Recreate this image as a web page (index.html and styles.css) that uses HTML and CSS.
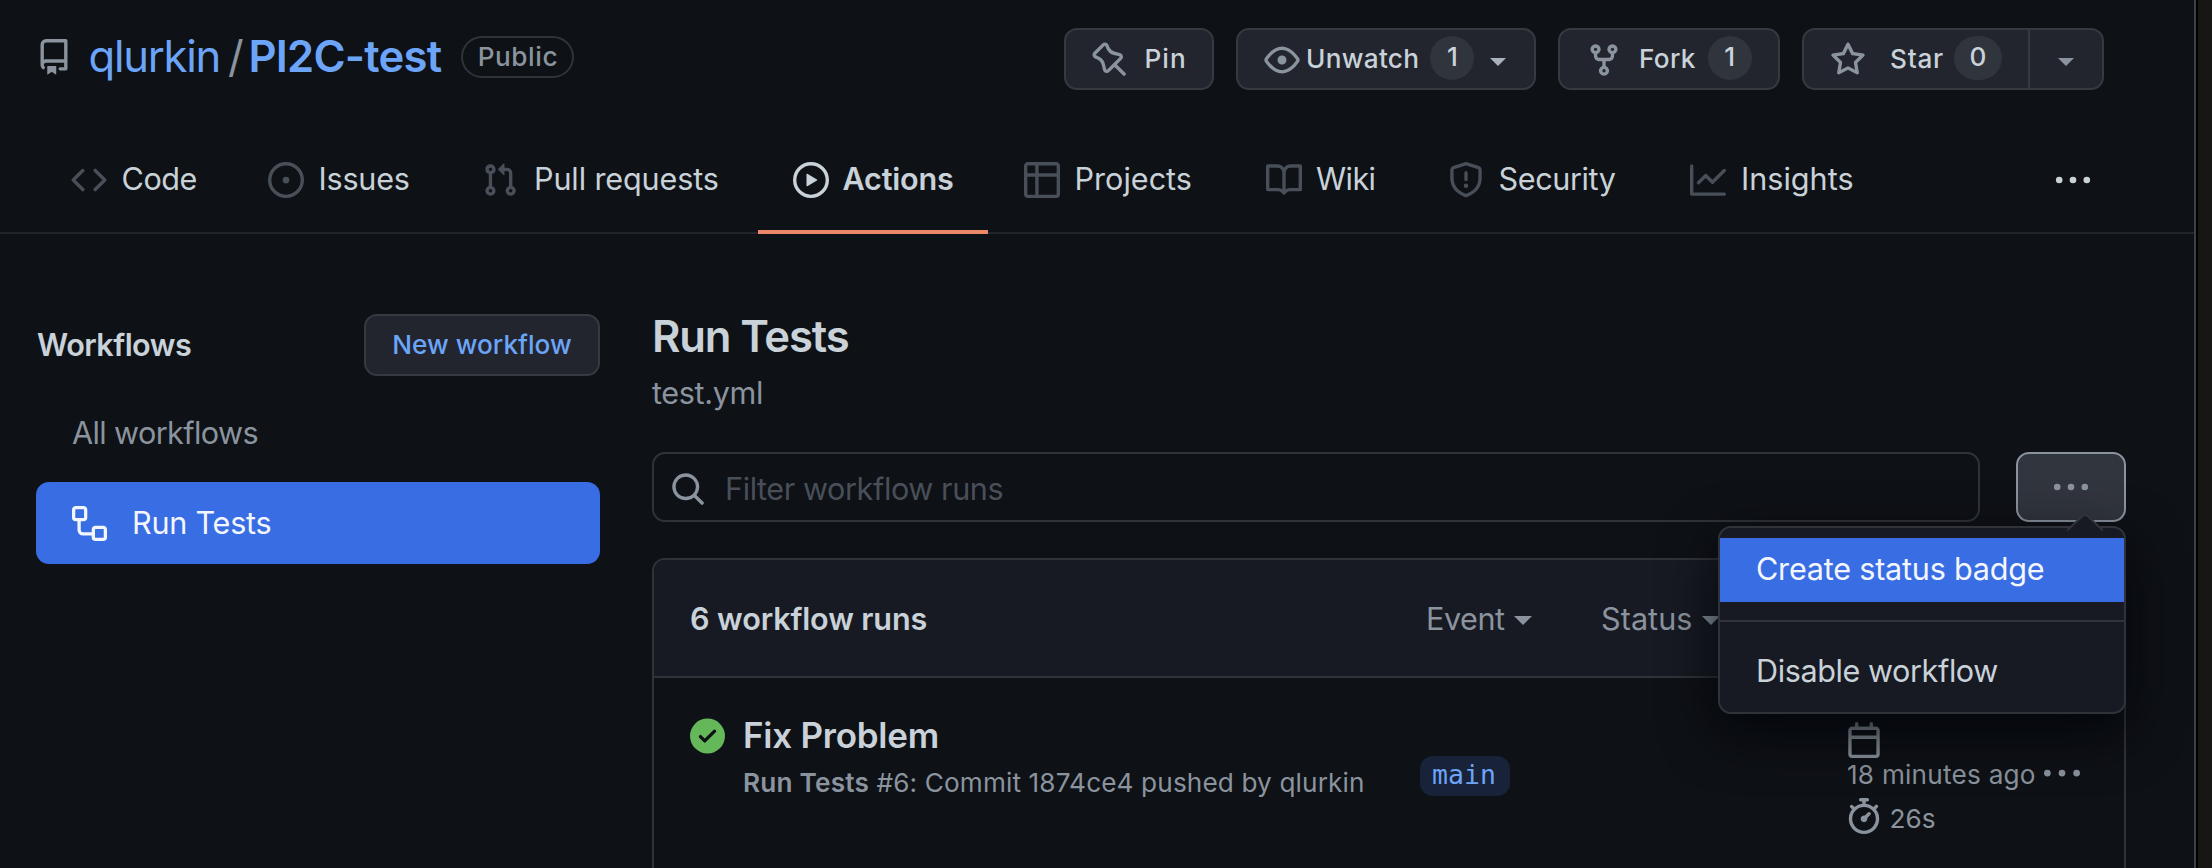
FILE: index.html
```html
<!DOCTYPE html>
<html lang="en">
<head>
<meta charset="utf-8">
<title>Actions · qlurkin/PI2C-test</title>
<link rel="stylesheet" href="styles.css">
</head>
<body>
<div class="page">
  <header class="repo-head">
    <div class="repo-title">
      <svg class="icon" viewBox="0 0 16 16"><path d="M2 2.5A2.5 2.5 0 014.5 0h8.75a.75.75 0 01.75.75v12.5a.75.75 0 01-.75.75h-2.5a.75.75 0 110-1.5h1.75v-2h-8a1 1 0 00-.714 1.7.75.75 0 01-1.072 1.05A2.495 2.495 0 012 11.5v-9zm10.5-1V9h-8c-.356 0-.694.074-1 .208V2.5a1 1 0 011-1h8zM5 12.25v3.25a.25.25 0 00.4.2l1.45-1.087a.25.25 0 01.3 0L8.6 15.7a.25.25 0 00.4-.2v-3.25a.25.25 0 00-.25-.25h-3.5a.25.25 0 00-.25.25z"/></svg>
      <a class="owner">qlurkin</a><span class="slash">/</span><a class="repo">PI2C-test</a>
      <span class="visibility">Public</span>
    </div>
    <div class="repo-actions">
      <div class="btn btn-pin">
        <svg class="icon" viewBox="0 0 16 16"><path d="M4.456.734a1.75 1.75 0 012.826.504l.613 1.327a3.081 3.081 0 002.084 1.707l2.454.584c1.332.317 1.8 1.972.832 2.94L11.06 10l3.72 3.72a.75.75 0 11-1.061 1.06L10 11.06l-2.204 2.205c-.968.968-2.623.5-2.94-.832l-.584-2.454a3.081 3.081 0 00-1.707-2.084l-1.327-.613a1.75 1.75 0 01-.504-2.826L4.456.734zM5.92 1.866a.25.25 0 00-.404-.072L1.794 5.516a.25.25 0 00.072.404l1.328.613A4.582 4.582 0 015.73 9.63l.584 2.454a.25.25 0 00.42.12l5.47-5.47a.25.25 0 00-.12-.42L9.63 5.73a4.581 4.581 0 01-3.098-2.537L5.92 1.866z"/></svg>
        <span class="label">Pin</span>
      </div>
      <div class="btn btn-watch">
        <svg class="icon" viewBox="0 0 16 16"><path d="M1.679 7.932c.412-.621 1.242-1.75 2.366-2.717C5.175 4.242 6.527 3.5 8 3.5c1.473 0 2.824.742 3.955 1.715 1.124.967 1.954 2.096 2.366 2.717a.119.119 0 010 .136c-.412.621-1.242 1.75-2.366 2.717C10.825 11.758 9.473 12.5 8 12.5c-1.473 0-2.824-.742-3.955-1.715C2.92 9.818 2.09 8.69 1.679 8.068a.119.119 0 010-.136zM8 2c-1.981 0-3.67.992-4.933 2.078C1.797 5.169.88 6.423.43 7.1a1.619 1.619 0 000 1.798c.45.678 1.367 1.932 2.637 3.024C4.329 13.008 6.019 14 8 14c1.981 0 3.67-.992 4.933-2.078 1.27-1.091 2.187-2.345 2.637-3.023a1.619 1.619 0 000-1.798c-.45-.678-1.367-1.932-2.637-3.023C11.671 2.992 9.981 2 8 2zm0 8a2 2 0 100-4 2 2 0 000 4z"/></svg>
        <span class="label">Unwatch</span><span class="counter">1</span><span class="caret"></span>
      </div>
      <div class="btn btn-fork">
        <svg class="icon" viewBox="0 0 16 16"><path d="M5 3.25a.75.75 0 11-1.5 0 .75.75 0 011.5 0zm0 2.122a2.25 2.25 0 10-1.5 0v.878A2.25 2.25 0 005.75 8.5h1.5v2.128a2.251 2.251 0 101.5 0V8.5h1.5a2.25 2.25 0 002.25-2.25v-.878a2.25 2.25 0 10-1.5 0v.878a.75.75 0 01-.75.75h-4.5A.75.75 0 015 6.25v-.878zm3.75 7.378a.75.75 0 11-1.5 0 .75.75 0 011.5 0zm3-8.75a.75.75 0 100-1.5.75.75 0 000 1.5z"/></svg>
        <span class="label">Fork</span><span class="counter">1</span>
      </div>
      <div class="btn btn-star">
        <svg class="icon" viewBox="0 0 16 16"><path d="M8 .25a.75.75 0 01.673.418l1.882 3.815 4.21.612a.75.75 0 01.416 1.279l-3.046 2.97.719 4.192a.75.75 0 01-1.088.791L8 12.347l-3.766 1.98a.75.75 0 01-1.088-.79l.72-4.194L.818 6.374a.75.75 0 01.416-1.28l4.21-.611L7.327.668A.75.75 0 018 .25zm0 2.445L6.615 5.5a.75.75 0 01-.564.41l-3.097.45 2.24 2.184a.75.75 0 01.216.664l-.528 3.084 2.769-1.456a.75.75 0 01.698 0l2.77 1.456-.53-3.084a.75.75 0 01.216-.664l2.24-2.183-3.096-.45a.75.75 0 01-.564-.41L8 2.694v.001z"/></svg>
        <span class="label">Star</span><span class="counter">0</span>
        <span class="star-menu"><span class="caret"></span></span>
      </div>
    </div>
  </header>

  <nav class="tabs">
    <a class="tab tab-code"><svg class="icon" viewBox="0 0 16 16"><path d="M4.72 3.22a.75.75 0 011.06 1.06L2.06 8l3.72 3.72a.75.75 0 11-1.06 1.06L.47 8.53a.75.75 0 010-1.06l4.25-4.25zm6.56 0a.75.75 0 10-1.06 1.06L13.94 8l-3.72 3.72a.75.75 0 101.06 1.06l4.25-4.25a.75.75 0 000-1.06l-4.25-4.25z"/></svg><span>Code</span></a>
    <a class="tab tab-issues"><svg class="icon" viewBox="0 0 16 16"><path d="M8 9.5a1.5 1.5 0 100-3 1.5 1.5 0 000 3z"/><path d="M8 0a8 8 0 100 16A8 8 0 008 0zM1.5 8a6.5 6.5 0 1113 0 6.5 6.5 0 01-13 0z"/></svg><span>Issues</span></a>
    <a class="tab tab-pulls"><svg class="icon" viewBox="0 0 16 16"><path d="M7.177 3.073L9.573.677A.25.25 0 0110 .854v4.792a.25.25 0 01-.427.177L7.177 3.427a.25.25 0 010-.354zM3.75 2.5a.75.75 0 100 1.5.75.75 0 000-1.5zm-2.25.75a2.25 2.25 0 113 2.122v5.256a2.251 2.251 0 11-1.5 0V5.372A2.25 2.25 0 011.5 3.25zM11 2.5h-1V4h1a1 1 0 011 1v5.628a2.251 2.251 0 101.5 0V5A2.5 2.5 0 0011 2.5zm1 10.25a.75.75 0 111.5 0 .75.75 0 01-1.5 0zM3.75 12a.75.75 0 100 1.5.75.75 0 000-1.5z"/></svg><span>Pull requests</span></a>
    <a class="tab tab-actions selected"><svg class="icon" viewBox="0 0 16 16"><path d="M1.5 8a6.5 6.5 0 1113 0 6.5 6.5 0 01-13 0zM8 0a8 8 0 100 16A8 8 0 008 0zM6.379 5.227A.25.25 0 006 5.442v5.117a.25.25 0 00.379.214l4.264-2.559a.25.25 0 000-.428L6.379 5.227z"/></svg><span>Actions</span></a>
    <a class="tab tab-projects"><svg class="icon" viewBox="0 0 16 16"><path d="M0 1.75C0 .784.784 0 1.75 0h12.5C15.216 0 16 .784 16 1.75v12.5A1.75 1.75 0 0114.25 16H1.75A1.75 1.75 0 010 14.25V1.75zM6.5 6.5v8h7.75a.25.25 0 00.25-.25V6.5h-8zM14.5 5V1.75a.25.25 0 00-.25-.25H6.5V5h8zM5 1.5V5H1.5V1.75a.25.25 0 01.25-.25H5zM1.5 6.5H5v8H1.75a.25.25 0 01-.25-.25V6.5z"/></svg><span>Projects</span></a>
    <a class="tab tab-wiki"><svg class="icon" viewBox="0 0 16 16"><path d="M0 1.75A.75.75 0 01.75 1h4.253c1.227 0 2.317.59 3 1.501A3.744 3.744 0 0111.006 1h4.245a.75.75 0 01.75.75v10.5a.75.75 0 01-.75.75h-4.507a2.25 2.25 0 00-1.591.659l-.622.621a.75.75 0 01-1.06 0l-.622-.621A2.25 2.25 0 005.258 13H.75a.75.75 0 01-.75-.75V1.75zm8.755 3a2.25 2.25 0 012.25-2.25H14.5v9h-3.757c-.71 0-1.4.201-1.992.572l.004-7.322zm-1.504 7.324l.004-5.073-.002-2.253A2.25 2.25 0 005.003 2.5H1.5v9h3.757a3.75 3.75 0 011.994.574z"/></svg><span>Wiki</span></a>
    <a class="tab tab-security"><svg class="icon" viewBox="0 0 16 16"><path d="M7.467.133a1.75 1.75 0 011.066 0l5.25 1.68A1.75 1.75 0 0115 3.48V7c0 1.566-.32 3.182-1.303 4.682-.983 1.498-2.585 2.813-5.032 3.855a1.7 1.7 0 01-1.33 0c-2.447-1.042-4.049-2.357-5.032-3.855C1.32 10.182 1 8.566 1 7V3.48a1.75 1.75 0 011.217-1.667l5.25-1.68zm.61 1.429a.25.25 0 00-.153 0l-5.25 1.68a.25.25 0 00-.174.238V7c0 1.358.275 2.666 1.057 3.86.784 1.194 2.121 2.34 4.366 3.297a.2.2 0 00.154 0c2.245-.956 3.582-2.104 4.366-3.298C13.225 9.666 13.5 8.36 13.5 7V3.48a.25.25 0 00-.174-.237l-5.25-1.68zM9 10.5a1 1 0 11-2 0 1 1 0 012 0zm-.25-5.75a.75.75 0 10-1.5 0v3a.75.75 0 001.5 0v-3z"/></svg><span>Security</span></a>
    <a class="tab tab-insights"><svg class="icon" viewBox="0 0 16 16"><path d="M1.5 1.75a.75.75 0 00-1.5 0v12.5c0 .414.336.75.75.75h14.5a.75.75 0 000-1.5H1.5V1.75zm14.28 2.53a.75.75 0 00-1.06-1.06L10 7.94 7.53 5.47a.75.75 0 00-1.06 0L3.22 8.72a.75.75 0 001.06 1.06L7 7.06l2.47 2.47a.75.75 0 001.06 0l5.25-5.25z"/></svg><span>Insights</span></a>
    <svg class="dots dots-nav" viewBox="0 0 36 8"><circle cx="4.2" cy="4" r="3.3"/><circle cx="18" cy="4" r="3.3"/><circle cx="31.8" cy="4" r="3.3"/></svg>
  </nav>

  <div class="content">
    <aside class="sidebar">
      <div class="side-head">
        <h2 class="side-title">Workflows</h2>
        <div class="btn btn-new">New workflow</div>
      </div>
      <a class="side-all">All workflows</a>
      <a class="side-item"><svg class="icon" viewBox="0 0 16 16"><path d="M0 1.75C0 .784.784 0 1.75 0h3.5C6.216 0 7 .784 7 1.75v3.5A1.75 1.75 0 015.25 7H4v4a1 1 0 001 1h4v-1.25C9 9.784 9.784 9 10.75 9h3.5c.966 0 1.75.784 1.75 1.75v3.5A1.75 1.75 0 0114.25 16h-3.5A1.75 1.75 0 019 14.25v-.75H5A2.5 2.5 0 012.5 11V7h-.75A1.75 1.75 0 010 5.25v-3.5zm1.75-.25a.25.25 0 00-.25.25v3.5c0 .138.112.25.25.25h3.5a.25.25 0 00.25-.25v-3.5a.25.25 0 00-.25-.25h-3.5zm9 9a.25.25 0 00-.25.25v3.5c0 .138.112.25.25.25h3.5a.25.25 0 00.25-.25v-3.5a.25.25 0 00-.25-.25h-3.5z"/></svg><span>Run Tests</span></a>
    </aside>

    <main class="main">
      <h1 class="wf-title">Run Tests</h1>
      <div class="wf-file">test.yml</div>
      <div class="filter-row">
        <div class="search">
          <svg class="icon" viewBox="0 0 16 16"><path d="M11.5 7a4.499 4.499 0 11-8.998 0A4.499 4.499 0 0111.5 7zm-.82 4.74a6 6 0 111.06-1.06l3.04 3.04a.75.75 0 11-1.06 1.06l-3.04-3.04z"/></svg>
          <span class="placeholder">Filter workflow runs</span>
        </div>
        <div class="more">
          <svg class="dots" viewBox="0 0 36 8"><circle cx="4.2" cy="4" r="3.3"/><circle cx="18" cy="4" r="3.3"/><circle cx="31.8" cy="4" r="3.3"/></svg>
          <div class="menu">
            <svg class="menu-tip" viewBox="0 0 38 18"><path class="tip-fill" d="M1 18L17 2q2-2 4 0L37 18z"/><path class="tip-line" d="M1 16.5L16.5 2q2.5-2 5 0L37 16.5"/></svg>
            <div class="menu-item active">Create status badge</div>
            <div class="menu-rule"></div>
            <div class="menu-item">Disable workflow</div>
          </div>
        </div>
      </div>

      <section class="runs">
        <div class="runs-head">
          <strong class="runs-count">6 workflow runs</strong>
          <div class="facet facet-event">Event<span class="caret"></span></div>
          <div class="facet facet-status">Status<span class="caret"></span></div>
        </div>
        <div class="run">
          <div class="run-info">
            <svg class="icon run-ok" viewBox="0 0 16 16"><path d="M8 16A8 8 0 108 0a8 8 0 000 16zm3.78-9.72a.75.75 0 00-1.06-1.06L6.75 9.19 5.28 7.72a.75.75 0 00-1.06 1.06l2 2a.75.75 0 001.06 0l4.5-4.5z"/></svg>
            <div>
              <div class="run-title">Fix Problem</div>
              <div class="run-sub"><b>Run Tests</b> #6: Commit 1874ce4 pushed by qlurkin</div>
            </div>
          </div>
          <div><span class="branch">main</span></div>
          <div class="run-meta">
            <svg class="icon" viewBox="0 0 16 16"><path d="M4.75 0a.75.75 0 01.75.75V2h5V.75a.75.75 0 011.5 0V2h1.25c.966 0 1.75.784 1.75 1.75v10.5A1.75 1.75 0 0113.25 16H2.75A1.75 1.75 0 011 14.25V3.75C1 2.784 1.784 2 2.75 2H4V.75A.75.75 0 014.75 0zm-2 3.5a.25.25 0 00-.25.25V6h11V3.75a.25.25 0 00-.25-.25H2.75zM2.5 7.5v6.75c0 .138.112.25.25.25h10.5a.25.25 0 00.25-.25V7.5h-11z"/></svg>
            <div class="run-ago"><span>18 minutes ago</span><svg class="icon" viewBox="0 0 16 16"><circle cx="1.5" cy="8" r="1.5"/><circle cx="8" cy="8" r="1.5"/><circle cx="14.5" cy="8" r="1.5"/></svg></div>
            <div class="run-time"><svg class="icon" viewBox="0 0 16 16"><path d="M5.75.75A.75.75 0 016.5 0h3a.75.75 0 010 1.5h-.75v1l-.001.041a6.718 6.718 0 013.464 1.435l.007-.006.75-.75a.75.75 0 111.06 1.06l-.75.75-.006.007a6.75 6.75 0 11-10.548 0L2.72 5.03l-.75-.75a.75.75 0 011.06-1.06l.75.75.007.006A6.718 6.718 0 017.25 2.541a.756.756 0 010-.041v-1H6.5a.75.75 0 01-.75-.75zM8 14.5A5.25 5.25 0 108 4a5.25 5.25 0 000 10.5zm.389-6.7l1.33-1.33a.75.75 0 111.061 1.06L9.45 8.861A1.502 1.502 0 018 10.75a1.5 1.5 0 11.389-2.95z"/></svg><span>26s</span></div>
          </div>
        </div>
      </section>
    </main>
  </div>
</div>
</body>
</html>
```
FILE: styles.css
```css
* { box-sizing: border-box; }

html, body { margin: 0; height: 868px; overflow: hidden; }

body {
  background: #171615;
  color: #c9d1d9;
  font-family: Inter, "Liberation Sans", sans-serif;
  font-size: 30.6px;
  line-height: 40px;
  white-space: nowrap;
}

h1, h2 { margin: 0; }

.page {
  width: 2196px;
  height: 868px;
  overflow: hidden;
  background: #0e1116;
  border-right: 2px solid #3d4044;
  box-shadow: 2px 0 0 #000;
}

.icon { display: block; flex: none; width: 36px; height: 36px; fill: currentColor; fill-rule: evenodd; }
.dots { display: block; width: 36px; height: 8px; fill: currentColor; }

.caret {
  width: 0;
  border: solid transparent;
  border-width: 8px 8px 0;
  border-top-color: currentColor;
}

/* Repository header */
.repo-head {
  display: flex;
  justify-content: space-between;
  height: 126px;
  padding: 28px 90px 36px 36px;
}

.repo-title { display: flex; align-items: center; padding-bottom: 5px; color: #8b949e; font-size: 43.6px; }
.owner { margin-left: 16.5px; color: #6ca4f8; letter-spacing: -1.27px; }
.slash { margin: 0 6px 0 8px; letter-spacing: -1.3px; }
.repo { color: #6ca4f8; font-weight: 600; letter-spacing: -.76px; }
.visibility {
  width: 113px;
  height: 42px;
  margin-left: 20px;
  border: 2px solid #30343a;
  border-radius: 21px;
  font-size: 26.2px;
  font-weight: 500;
  line-height: 37px;
  letter-spacing: .57px;
  text-align: center;
}

.repo-actions { display: flex; }

.btn {
  display: flex;
  align-items: center;
  height: 62px;
  border: 2px solid #363a40;
  border-radius: 13px;
  background: #22252d;
  font-size: 26.2px;
  font-weight: 500;
}
.repo-actions .icon { margin-top: 2px; color: #8b949e; }
.btn-pin { width: 150px; margin-right: 22px; padding-left: 25.5px; }
.btn-pin .label { margin-left: 17px; letter-spacing: 1px; }
.btn-watch { width: 300px; margin-right: 22px; padding-left: 26px; }
.btn-watch .label { margin: 0 11px 0 6px; letter-spacing: .3px; }
.btn-watch .caret { margin: 6px 0 0 16px; color: #a9b1ba; }
.btn-fork { width: 222px; margin-right: 22px; padding-left: 26px; }
.btn-fork .label { margin: 0 12px 0 17px; letter-spacing: .29px; }
.btn-star { width: 302px; padding-left: 26px; }
.btn-star .label { margin: 0 10px 0 24px; letter-spacing: .72px; }
.btn-star .counter { width: 48px; }

.counter {
  width: 44px;
  height: 44px;
  margin-bottom: 2px;
  border-radius: 22px;
  background: #30343c;
  line-height: 41px;
  text-align: center;
}

.star-menu {
  display: flex;
  align-items: center;
  justify-content: center;
  width: 74px;
  height: 58px;
  margin-left: auto;
  padding: 6px 0 0;
  border-left: 2px solid #363a40;
  color: #8b949e;
}

/* Tab bar */
.tabs {
  display: grid;
  grid-template-columns: 197px 213px 312px 231px 241px 183px 242px 400px 36px;
  align-items: start;
  height: 108px;
  padding-left: 36px;
  border-bottom: 2px solid #21252a;
}
.tab { display: flex; align-items: center; height: 108px; padding-left: 35px; }
.tab .icon { margin-right: 14.5px; color: #484f58; }
.tab span { padding-bottom: 2px; }
.tab-code { letter-spacing: -.47px; }
.tab-issues { letter-spacing: -.23px; }
.tab-pulls { padding-left: 36px; letter-spacing: -.13px; }
.tab-pulls .icon { margin-right: 16px; }
.tab-actions { letter-spacing: -.23px; }
.tab-actions .icon { margin-right: 13.5px; }
.tab-projects { letter-spacing: 0; }
.tab-wiki { padding-left: 36px; letter-spacing: -.58px; }
.tab-wiki .icon { margin-right: 14px; }
.tab-security { letter-spacing: -.4px; }
.tab-insights .icon { margin-right: 15px; }
.tab.selected { width: 230px; box-shadow: inset 0 -4px #ec8768; font-weight: 600; }
.tab.selected .icon { color: #c9d1d9; }
.dots-nav { margin-top: 50px; }

/* Content */
.content { display: flex; padding: 80px 0 0 36px; }

.sidebar { width: 564px; margin-right: 52px; }
.side-head { display: flex; align-items: center; justify-content: space-between; }
.side-title { margin-left: 1px; font-size: 30.6px; font-weight: 600; letter-spacing: -.52px; }
.btn-new { justify-content: center; width: 236px; padding-bottom: 1px; color: #6ca4f8; }
.side-all {
  display: block;
  margin: 11px 0 4px;
  padding-left: 36px;
  color: #8b949e;
  line-height: 91px;
  letter-spacing: -.61px;
}
.side-item {
  display: flex;
  align-items: center;
  gap: 25px;
  height: 82px;
  padding-left: 36px;
  border-radius: 13px;
  background: #386de3;
  color: #f3f6fc;
  letter-spacing: -.25px;
}
.side-item .icon { width: 35px; height: 35px; }

.main { width: 1474px; }
.wf-title { font-size: 43.6px; font-weight: 600; line-height: 46px; letter-spacing: -1.16px; }
.wf-file { margin: 13px 0 39px; color: #8b949e; letter-spacing: -.36px; }

.filter-row { display: flex; justify-content: space-between; height: 70px; }
.search {
  display: flex;
  align-items: center;
  gap: 19px;
  width: 1328px;
  padding: 4px 0 0 16px;
  border: 2px solid #30343a;
  border-radius: 13px;
  color: #8b949e;
}
.placeholder { color: #484f58; letter-spacing: -.42px; }

.more {
  position: relative;
  display: flex;
  align-items: center;
  justify-content: center;
  width: 110px;
  border: 2px solid #8b949e;
  border-radius: 13px;
  background: #31353d;
  color: #8b949e;
}

.menu {
  position: absolute;
  z-index: 2;
  top: 72px;
  right: -2px;
  width: 408px;
  height: 188px;
  padding-top: 10px;
  border: 2px solid #30343a;
  border-radius: 13px;
  background: #171a22;
  box-shadow: 0 18px 54px rgba(1, 4, 9, .85);
  color: #c9d1d9;
}
.menu-tip { position: absolute; top: -14px; right: 20px; width: 38px; height: 18px; }
.tip-fill { fill: #171a22; }
.tip-line { fill: none; stroke: #30343a; stroke-width: 2; }
.menu-item { height: 64px; padding-left: 36px; line-height: 62px; letter-spacing: -.42px; }
.menu-item.active { background: #386de3; color: #f3f6fc; letter-spacing: -.23px; }
.menu-rule { height: 2px; margin: 18px 0; background: #30343a; }

/* Run list */
.runs {
  height: 400px;
  margin-top: 36px;
  border: 2px solid #30343a;
  border-radius: 13px;
}
.runs-head {
  display: grid;
  grid-template-columns: 736px 175px auto;
  align-items: center;
  height: 118px;
  padding: 2px 0 0 36px;
  border-bottom: 2px solid #30343a;
  border-radius: 11px 11px 0 0;
  background: #171a22;
}
.runs-count { font-weight: 600; letter-spacing: -.12px; }
.facet { display: flex; align-items: center; gap: 9px; color: #8b949e; }
.facet .caret { margin-top: 2px; border-width: 9px 9px 0; }
.facet-event { letter-spacing: -.47px; }
.facet-status { letter-spacing: .05px; }

.run {
  display: grid;
  grid-template-columns: 730px 426px auto;
  padding-left: 36px;
  color: #8b949e;
  font-size: 26.2px;
}
.run-info { display: flex; gap: 18px; padding-top: 40px; }
.run-ok { width: 35px; color: #64b85a; }
.run-title { color: #c9d1d9; font-size: 35px; font-weight: 600; line-height: 34px; letter-spacing: -.25px; }
.run-sub { margin-top: 11px; letter-spacing: .12px; }
.run-sub b { font-weight: 600; letter-spacing: .2px; }
.branch {
  display: block;
  width: 90px;
  height: 40px;
  margin-top: 78px;
  border-radius: 13px;
  background: #182238;
  color: #6ca4f8;
  font: 26.5px/38px "DejaVu Sans Mono", monospace;
  text-indent: -2px;
  text-align: center;
}
.run-meta { padding-top: 44px; }
.run-ago { display: flex; align-items: center; gap: 8px; height: 33px; padding-left: 1px; letter-spacing: .22px; }
.run-ago .icon { margin-bottom: 3px; }
.run-time { display: flex; align-items: center; gap: 7.5px; height: 36px; margin-top: 7px; }
.run-time span { margin-top: 5px; }
```
